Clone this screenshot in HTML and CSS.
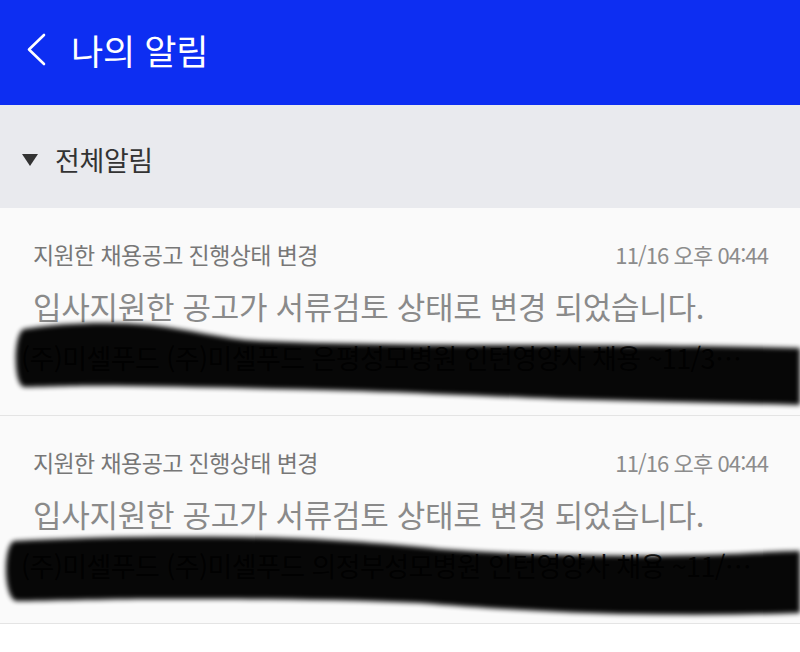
FILE: index.html
```html
<!DOCTYPE html>
<html lang="ko">
<head>
<meta charset="utf-8">
<title>나의 알림</title>
<link rel="stylesheet" href="styles.css">
</head>
<body>
<header class="appbar">
  <svg class="back" width="24" height="36" viewBox="0 0 24 36" aria-hidden="true">
    <path d="M18 3 L3 17.5 L18 32" fill="none" stroke="#fff" stroke-width="2.6" stroke-linecap="round" stroke-linejoin="round"/>
  </svg>
  <h1 class="title">나의 알림</h1>
</header>
<section class="filter">
  <span class="tri"></span>
  <span class="filter-label">전체알림</span>
</section>
<ul class="list">
  <li class="item">
    <div class="row-top">
      <span class="cat">지원한 채용공고 진행상태 변경</span>
      <span class="time">11/16 오후 04:44</span>
    </div>
    <p class="msg">입사지원한 공고가 서류검토 상태로 변경 되었습니다.</p>
    <p class="sub">(주)미셀푸드 (주)미셀푸드 은평성모병원 인턴영양사 채용 ~11/3…</p>
    <svg class="scribble" width="800" height="208" viewBox="0 0 800 208" aria-hidden="true">
      <defs><filter id="b1" x="-5%" y="-20%" width="110%" height="140%"><feGaussianBlur stdDeviation="2.6"/></filter></defs>
      <path filter="url(#b1)" fill="#050505" d="M24 121 C60 115 110 113 150 117 C190 121 220 131 260 133 C330 136 420 137 520 137 C620 137 720 138 800 140 L800 197 C720 195 640 193 560 191 C480 188 420 185 360 183 C280 181 200 179 130 178 C80 177 40 179 24 179 C13 177 13 125 24 121 Z"/>
    </svg>
  </li>
  <li class="item">
    <div class="row-top">
      <span class="cat">지원한 채용공고 진행상태 변경</span>
      <span class="time">11/16 오후 04:44</span>
    </div>
    <p class="msg">입사지원한 공고가 서류검토 상태로 변경 되었습니다.</p>
    <p class="sub">(주)미셀푸드 (주)미셀푸드 의정부성모병원 인턴영양사 채용 ~11/…</p>
    <svg class="scribble" width="800" height="208" viewBox="0 0 800 208" aria-hidden="true">
      <defs><filter id="b2" x="-5%" y="-20%" width="110%" height="140%"><feGaussianBlur stdDeviation="2.6"/></filter></defs>
      <path filter="url(#b2)" fill="#050505" d="M14 125 C80 121 160 120 240 121 C320 122 380 127 440 133 C520 139 620 141 700 139 C740 138 780 135 800 135 L800 197 C740 199 680 199 620 198 C540 196 470 191 420 187 C340 183 240 183 160 183 C100 183 50 185 16 185 C3 181 3 129 14 125 Z"/>
    </svg>
  </li>
</ul>
</body>
</html>
```

FILE: styles.css
```css
* { box-sizing: border-box; }
html, body { margin: 0; padding: 0; }
body {
  width: 800px;
  height: 652px;
  overflow: hidden;
  background: #ffffff;
  font-family: "Noto Sans CJK KR", "Noto Sans", sans-serif;
}
.appbar {
  height: 105px;
  background: #0d2ef2;
  display: flex;
  align-items: center;
  padding: 0 0 6px 26px;
}
.back { display: block; flex: none; }
.title {
  margin: 0 0 0 21px;
  font-size: 35px;
  font-weight: 400;
  color: #ffffff;
  line-height: 40px;
  letter-spacing: -0.3px;
}
.filter {
  height: 103px;
  background: #e9eaee;
  display: flex;
  align-items: center;
  padding: 6px 0 0 22px;
}
.tri {
  width: 0;
  height: 0;
  border-left: 8px solid transparent;
  border-right: 8px solid transparent;
  border-top: 12px solid #333333;
  margin-right: 17px;
}
.filter-label {
  font-size: 27px;
  color: #333333;
  line-height: 34px;
  letter-spacing: -0.4px;
}
.list { list-style: none; margin: 0; padding: 0; }
.item {
  position: relative;
  overflow: hidden;
  height: 208px;
  background: #fafafa;
  border-bottom: 1px solid #e4e4e4;
  padding: 30px 32px 0 33px;
}
.row-top {
  display: flex;
  justify-content: space-between;
  align-items: center;
  height: 32px;
}
.cat {
  font-size: 23px;
  color: #777777;
  letter-spacing: -0.6px;
}
.time {
  font-size: 22px;
  color: #8c8c8c;
  letter-spacing: -0.9px;
}
.msg {
  margin: 16px 0 0;
  font-size: 31px;
  line-height: 40px;
  color: #8a8a8a;
  letter-spacing: -0.3px;
  white-space: nowrap;
}
.sub {
  margin: 16px 0 0 -12px;
  font-size: 27px;
  line-height: 32px;
  color: #222222;
  white-space: nowrap;
  letter-spacing: -0.6px;
}
.scribble {
  position: absolute;
  left: 0;
  top: 0;
  opacity: 0.97;
}
```
